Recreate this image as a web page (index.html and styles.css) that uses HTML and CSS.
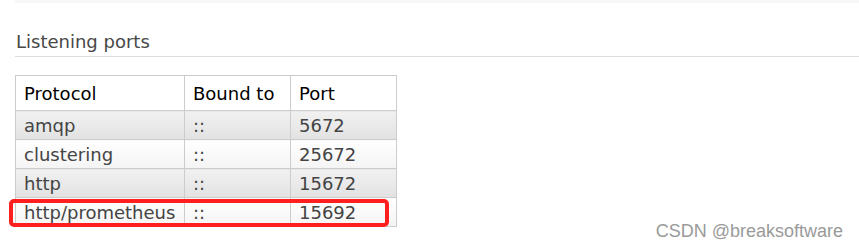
FILE: index.html
```html
<!DOCTYPE html>
<html>
<head>
<meta charset="utf-8">
<link rel="stylesheet" href="styles.css">
</head>
<body>
<div class="topbar"></div>
<h3 class="section-title">Listening ports</h3>
<div class="table-wrap">
  <table class="ports">
    <colgroup>
      <col class="c1"><col class="c2"><col class="c3">
    </colgroup>
    <thead>
      <tr><th>Protocol</th><th>Bound to</th><th>Port</th></tr>
    </thead>
    <tbody>
      <tr class="alt1"><td>amqp</td><td>::</td><td>5672</td></tr>
      <tr class="alt0"><td>clustering</td><td>::</td><td>25672</td></tr>
      <tr class="alt1"><td>http</td><td>::</td><td>15672</td></tr>
      <tr class="alt0"><td>http/prometheus</td><td>::</td><td>15692</td></tr>
    </tbody>
  </table>
  <div class="highlight"></div>
</div>
<div class="watermark">CSDN @breaksoftware</div>
</body>
</html>
```
FILE: styles.css
```css
html, body {
  margin: 0;
  padding: 0;
  background: #fff;
}
body {
  font-family: "DejaVu Sans", Verdana, sans-serif;
  width: 859px;
  height: 249px;
  overflow: hidden;
  position: relative;
}
.topbar {
  margin-left: 15px;
  height: 3px;
  background: #f7f7f7;
}
.section-title {
  margin: 28px 0 18px 15px;
  padding: 0 0 4px 1px;
  font-size: 18px;
  font-weight: normal;
  line-height: 21px;
  color: #484848;
  border-bottom: 1px solid #dddddd;
}
.table-wrap {
  position: relative;
  margin-left: 15px;
  width: 381px;
}
.ports {
  border-collapse: collapse;
  table-layout: fixed;
  width: 381px;
  font-size: 18px;
  line-height: 21px;
}
.ports col.c1 { width: 169px; }
.ports col.c2 { width: 106px; }
.ports col.c3 { width: 106px; }
.ports th, .ports td {
  border: 1px solid #cccccc;
  text-align: left;
  padding: 0 0 0 8px;
  white-space: nowrap;
  overflow: hidden;
}
.ports th {
  height: 34px;
  font-weight: normal;
  color: #000;
  background: #fff;
}
.ports td {
  height: 28px;
  color: #444444;
}
.ports tr.alt1 td {
  background: linear-gradient(#f1f1f1, #e2e2e2);
}
.ports tr.alt0 td {
  background: linear-gradient(#ffffff, #f4f4f4);
}
.highlight {
  position: absolute;
  left: -6px;
  top: 124px;
  width: 372px;
  height: 20px;
  border: 4px solid #ff1f1f;
  border-radius: 5px;
}
.watermark {
  position: absolute;
  right: 16px;
  top: 222px;
  font-family: "Liberation Sans", Arial, sans-serif;
  font-size: 18px;
  line-height: 19px;
  color: #9a9a9a;
}
```
